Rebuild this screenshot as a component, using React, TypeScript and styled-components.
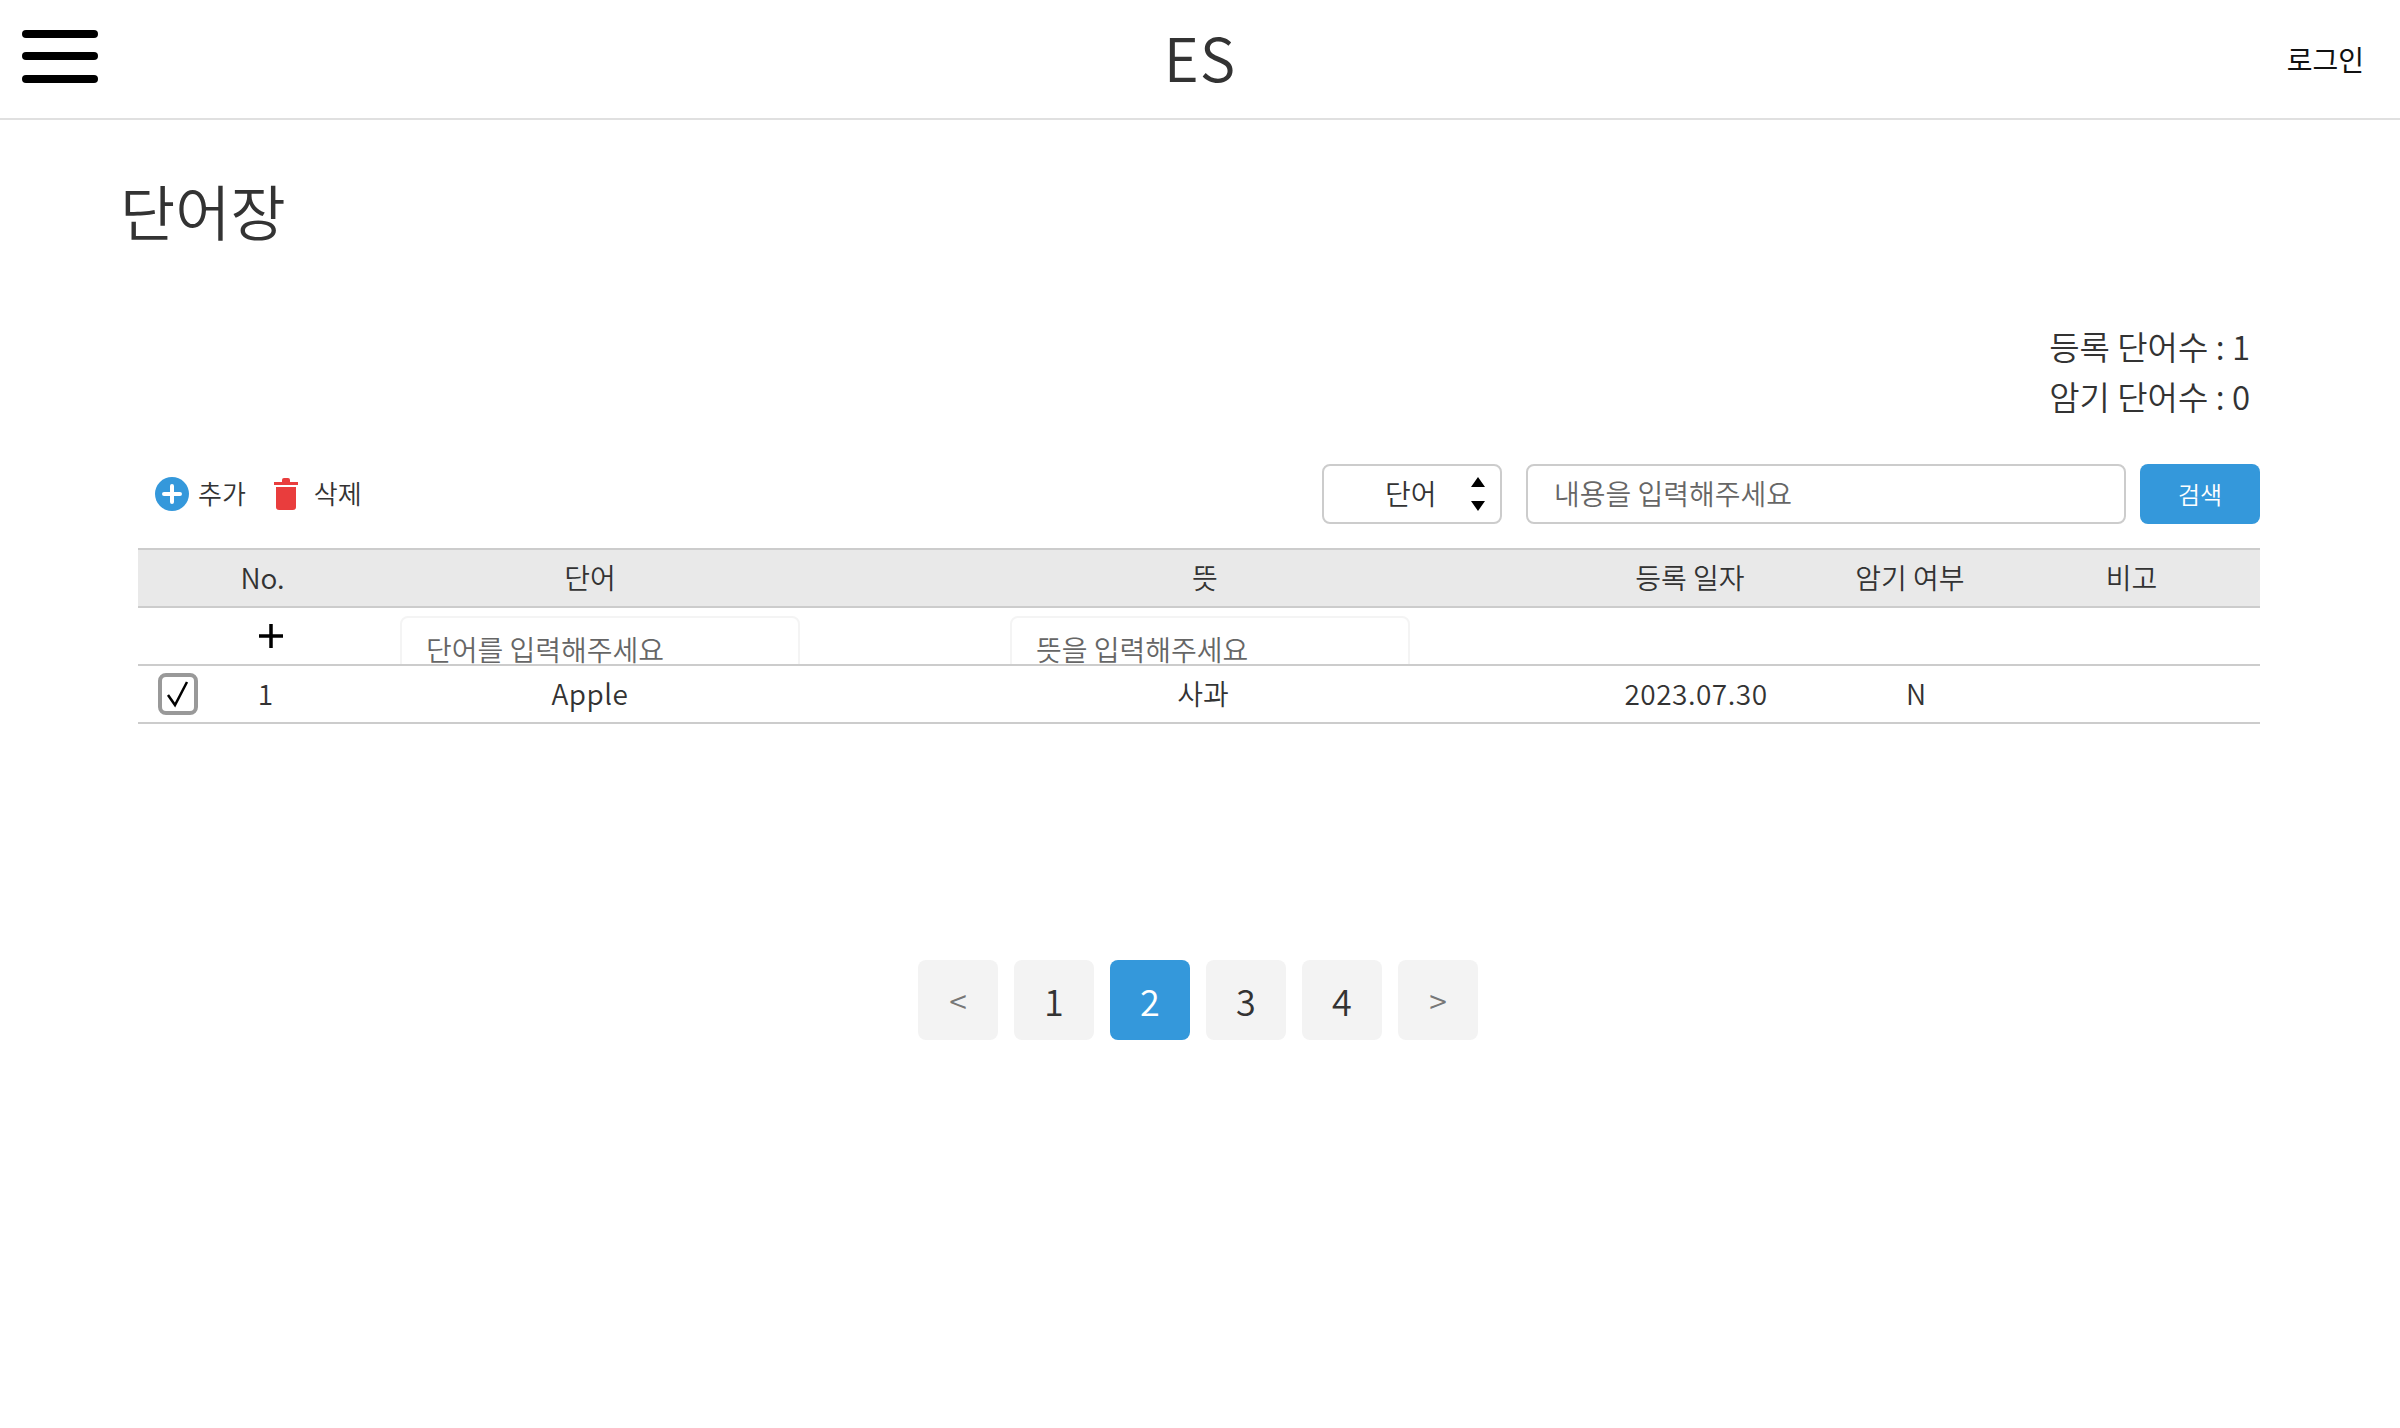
import React, { ReactElement } from 'react';
import styled, { createGlobalStyle } from 'styled-components';

const GlobalStyle = createGlobalStyle`
  html, body {
    margin: 0;
    padding: 0;
    background: #fff;
  }
  body, input, button {
    font-family: 'Noto Sans CJK KR', 'Noto Sans', sans-serif;
    font-weight: 350;
    color: #333;
  }
  * {
    box-sizing: border-box;
  }
`;

const Header = styled.header`
  height: 120px;
  border-bottom: 2px solid #e0e0e0;
  padding: 0 36px 0 22px;
  display: grid;
  grid-template-columns: 1fr auto 1fr;
  align-items: center;
`;

const Burger = styled.button`
  width: 76px;
  height: 53px;
  margin-top: -6px;
  padding: 0;
  border: 0;
  background: none;
  display: flex;
  flex-direction: column;
  justify-content: space-between;
  span {
    display: block;
    height: 8px;
    border-radius: 4px;
    background: #000;
  }
`;

const Logo = styled.div`
  margin: 0 0 6px 14px;
  font-size: 60px;
  line-height: 1;
  letter-spacing: 1px;
`;

const Login = styled.a`
  justify-self: end;
  font-size: 28px;
  font-weight: 400;
  color: #111;
`;

const Main = styled.main`
  padding: 48px 140px 0 120px;
`;

const Title = styled.h1`
  margin: 0;
  font-size: 60px;
  font-weight: 350;
  line-height: 84px;
`;

const Stats = styled.div`
  margin: 69px 10px 0 0;
  text-align: right;
  font-size: 33px;
  line-height: 50px;
`;

const Toolbar = styled.div`
  margin: 43px 0 24px 18px;
  padding-left: 17px;
  height: 60px;
  display: flex;
  align-items: center;
`;

const Action = styled.button<{ $gap: number }>`
  padding: 0;
  margin-right: 28px;
  border: 0;
  background: none;
  display: flex;
  align-items: center;
  gap: ${({ $gap }) => $gap}px;
  font-size: 26px;
  line-height: 34px;
`;

const ActionLabel = styled.span`
  margin-top: -3px;
`;

const SelectBox = styled.div`
  width: 180px;
  height: 60px;
  margin-left: auto;
  padding: 0 14px 3px 61px;
  border: 2px solid #ccc;
  border-radius: 8px;
  display: flex;
  align-items: center;
  justify-content: space-between;
  font-size: 28px;
  svg {
    margin-top: 3px;
  }
`;

const SearchInput = styled.input`
  width: 600px;
  height: 60px;
  margin-left: 24px;
  padding: 0 26px 3px;
  border: 2px solid #ccc;
  border-radius: 8px;
  font-size: 28px;
  outline: none;
  &::placeholder {
    color: #666;
  }
`;

const SearchButton = styled.button`
  width: 120px;
  height: 60px;
  margin-left: 14px;
  padding-bottom: 3px;
  border: 0;
  border-radius: 8px;
  background: #3498db;
  color: #fff;
  font-size: 24px;
`;

const Table = styled.div`
  margin-left: 18px;
  width: 2122px;
`;

const Row = styled.div<{ $head?: boolean; $height: number }>`
  height: ${({ $height }) => $height}px;
  display: grid;
  grid-template-columns: 62px 125px 530px 700px 270px 170px 265px;
  align-items: center;
  overflow: hidden;
  text-align: center;
  font-size: 28px;
  border-bottom: 2px solid #ccc;
  background: ${({ $head }) => ($head ? '#e9e9e9' : '#fff')};
  ${({ $head }) => $head && 'border-top: 2px solid #ccc;'}
`;

const Cell = styled.div<{ $shift?: number; $latin?: boolean }>`
  padding-bottom: 3px;
  transform: translateX(${({ $shift }) => $shift ?? 0}px);
  white-space: nowrap;
  letter-spacing: ${({ $latin }) => ($latin ? '0.5px' : 'normal')};
`;

const AddMark = styled.div`
  display: flex;
  justify-content: center;
  transform: translate(8px, -7px);
`;

const InlineInput = styled.input<{ $left: number }>`
  display: block;
  width: 400px;
  height: 62px;
  margin: 8px 0 0 ${({ $left }) => $left}px;
  padding: 4px 24px 0;
  border: 2px solid #f4f4f4;
  border-radius: 8px;
  font-size: 28px;
  outline: none;
  &::placeholder {
    color: #666;
  }
`;

const CheckBox = styled.div`
  width: 40px;
  height: 42px;
  margin-left: 20px;
  border: 4px solid #999;
  border-radius: 8px;
  display: flex;
  align-items: center;
  justify-content: center;
`;

const Pagination = styled.nav`
  margin: 236px 0 0 16px;
  display: flex;
  justify-content: center;
  gap: 16px;
`;

const PageButton = styled.button<{ $active?: boolean; $arrow?: boolean }>`
  width: 80px;
  height: 80px;
  padding: 0;
  border: 0;
  border-radius: 8px;
  background: ${({ $active }) => ($active ? '#3498db' : '#f3f3f3')};
  color: ${({ $active, $arrow }) => ($active ? '#fff' : $arrow ? '#777' : '#333')};
  font-size: ${({ $arrow }) => ($arrow ? 32 : 36)}px;
`;

function PlusIcon(): ReactElement {
  return (
    <svg width="34" height="34" viewBox="0 0 34 34">
      <circle cx="17" cy="17" r="17" fill="#3498db" />
      <path d="M17 9v16M9 17h16" stroke="#fff" strokeWidth="4" strokeLinecap="round" />
    </svg>
  );
}

function TrashIcon(): ReactElement {
  return (
    <svg width="24" height="32" viewBox="0 0 24 32">
      <path d="M0 4h8V2a2 2 0 0 1 2-2h4a2 2 0 0 1 2 2v2h8v3H0z" fill="#e93d3d" />
      <path d="M2 9h20v20a3 3 0 0 1-3 3H5a3 3 0 0 1-3-3z" fill="#e93d3d" />
    </svg>
  );
}

function SortArrows(): ReactElement {
  return (
    <svg width="16" height="36" viewBox="0 0 16 36">
      <path d="M8 1l7 10H1zM1 25h14l-7 10z" fill="#000" />
    </svg>
  );
}

function CheckIcon(): ReactElement {
  return (
    <svg width="26" height="28" viewBox="0 0 26 28">
      <path d="M3 15l7 10L22 2" fill="none" stroke="#000" strokeWidth="2.5" />
    </svg>
  );
}

function AddIcon(): ReactElement {
  return (
    <svg width="24" height="24" viewBox="0 0 24 24">
      <path d="M12 0v24M0 12h24" stroke="#000" strokeWidth="3.5" />
    </svg>
  );
}

export default function App(): ReactElement {
  return (
    <>
      <GlobalStyle />
      <Header>
        <Burger aria-label="menu">
          <span />
          <span />
          <span />
        </Burger>
        <Logo>ES</Logo>
        <Login>로그인</Login>
      </Header>
      <Main>
        <Title>단어장</Title>
        <Stats>
          <div>등록 단어수 : 1</div>
          <div>암기 단어수 : 0</div>
        </Stats>
        <Toolbar>
          <Action $gap={9}>
            <PlusIcon />
            <ActionLabel>추가</ActionLabel>
          </Action>
          <Action $gap={16}>
            <TrashIcon />
            <ActionLabel>삭제</ActionLabel>
          </Action>
          <SelectBox>
            단어
            <SortArrows />
          </SelectBox>
          <SearchInput placeholder="내용을 입력해주세요" />
          <SearchButton>검색</SearchButton>
        </Toolbar>
        <Table>
          <Row $head $height={60}>
            <Cell />
            <Cell>No.</Cell>
            <Cell>단어</Cell>
            <Cell>뜻</Cell>
            <Cell>등록 일자</Cell>
            <Cell>암기 여부</Cell>
            <Cell $shift={4}>비고</Cell>
          </Row>
          <Row $height={58}>
            <Cell />
            <AddMark>
              <AddIcon />
            </AddMark>
            <InlineInput $left={75} placeholder="단어를 입력해주세요" />
            <InlineInput $left={155} placeholder="뜻을 입력해주세요" />
          </Row>
          <Row $height={58}>
            <CheckBox>
              <CheckIcon />
            </CheckBox>
            <Cell $shift={3}>1</Cell>
            <Cell $latin>Apple</Cell>
            <Cell $shift={-2}>사과</Cell>
            <Cell $shift={6} $latin>2023.07.30</Cell>
            <Cell $shift={6}>N</Cell>
            <Cell />
          </Row>
        </Table>
        <Pagination>
          <PageButton $arrow>&lt;</PageButton>
          <PageButton>1</PageButton>
          <PageButton $active>2</PageButton>
          <PageButton>3</PageButton>
          <PageButton>4</PageButton>
          <PageButton $arrow>&gt;</PageButton>
        </Pagination>
      </Main>
    </>
  );
}
